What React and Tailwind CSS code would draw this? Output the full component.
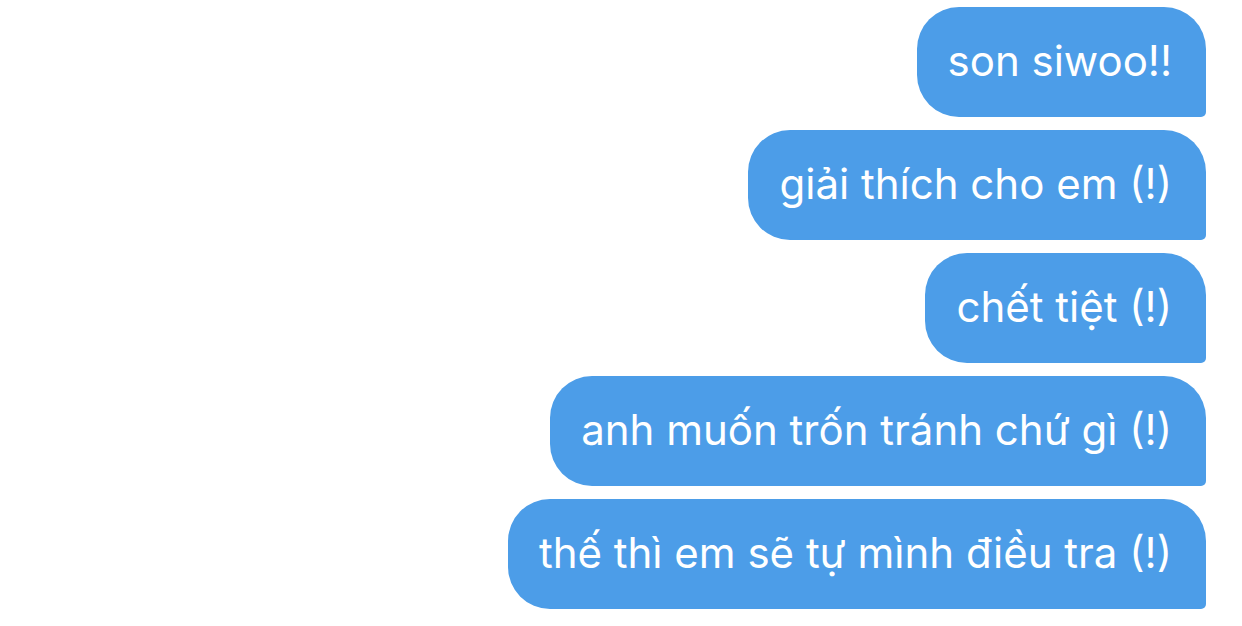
import React from "react";

const messages = [
  "son siwoo!!",
  "giải thích cho em (!)",
  "chết tiệt (!)",
  "anh muốn trốn tránh chứ gì (!)",
  "thế thì em sẽ tự mình điều tra (!)",
];

const Bubble = ({ text }) => (
  <div className="h-[110px] flex items-center pl-[31px] pr-[34px] pb-[2px] bg-[#4c9de8] text-white rounded-[42px] rounded-br-[5px] text-[42px] leading-none whitespace-nowrap">
    {text}
  </div>
);

export default function App() {
  return (
    <div
      className="w-[1242px] h-[626px] bg-white flex flex-col items-end gap-[13px] pt-[7px] pr-[36px] overflow-hidden"
      style={{ fontFamily: '"Inter", "Noto Sans", sans-serif' }}
    >
      {messages.map((m, i) => (
        <Bubble key={i} text={m} />
      ))}
    </div>
  );
}
